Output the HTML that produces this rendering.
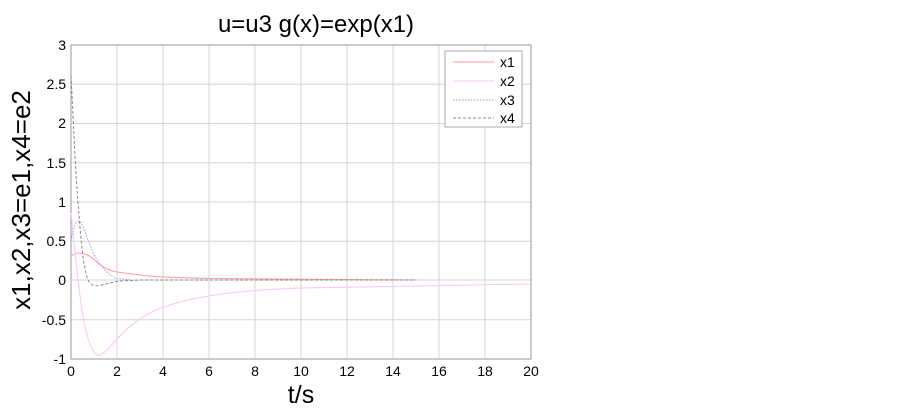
<!DOCTYPE html><html><head><style>body{margin:0;background:#fff}svg{display:block}text{font-family:"Liberation Sans",Arial,sans-serif}</style></head><body>
<svg width="900" height="410" xmlns="http://www.w3.org/2000/svg">
<rect width="900" height="410" fill="#fff"/>
<g stroke="#d4d4d4" stroke-width="1">
<line x1="117" y1="45" x2="117" y2="359"/><line x1="163" y1="45" x2="163" y2="359"/><line x1="209" y1="45" x2="209" y2="359"/><line x1="255" y1="45" x2="255" y2="359"/><line x1="301" y1="45" x2="301" y2="359"/><line x1="347" y1="45" x2="347" y2="359"/><line x1="393" y1="45" x2="393" y2="359"/><line x1="439" y1="45" x2="439" y2="359"/><line x1="485" y1="45" x2="485" y2="359"/>
<line x1="71" y1="84.2" x2="531" y2="84.2"/><line x1="71" y1="123.5" x2="531" y2="123.5"/><line x1="71" y1="162.7" x2="531" y2="162.7"/><line x1="71" y1="202" x2="531" y2="202"/><line x1="71" y1="241.2" x2="531" y2="241.2"/><line x1="71" y1="280" x2="531" y2="280"/><line x1="71" y1="319.7" x2="531" y2="319.7"/>
</g>
<rect x="71" y="45" width="460" height="314" fill="none" stroke="#999"/>
<g fill="none" stroke-width="1">
<path d="M71,256.5 C74,253 78,252 85,254 S96,262 99,264 C105,268 110,271 117,272 S150,276.5 163,277 S200,278.3 209,278.5 L417,280" stroke="#f99"/>
<path d="M71,213 C74,240 78,290 84,322 C88,342 92,352 97,355 C101,356 106,352 117,339 C133,322 148,312 163,307.5 C180,301 195,298 209,296 C240,291 270,289 301,288 L531,284" stroke="#f9c6f5"/>
<path d="M71,241 C74,226 76,220 79,221 C82,222 86,235 92,250 C97,262 104,271 115,278 L131,280" stroke="#99f" stroke-dasharray="1.5 1.5"/>
<path d="M71,76 C73,110 75,170 79,215 C82,255 85,275 89,282 C92,286 96,286 100,285.5 C107,284 112,282 120,281 L140,280 L416,280" stroke="#888" stroke-dasharray="3 2"/>
</g>
<rect x="445" y="51" width="77" height="76" fill="#fff" stroke="#aaa"/>
<line x1="453" y1="62" x2="494" y2="62" stroke="#f99"/>
<line x1="453" y1="81" x2="494" y2="81" stroke="#f9c6f5"/>
<line x1="453" y1="100" x2="494" y2="100" stroke="#99f" stroke-dasharray="1.5 1.5"/>
<line x1="453" y1="118" x2="494" y2="118" stroke="#888" stroke-dasharray="3 2"/>
<g font-size="14" fill="#000"><text x="500" y="67">x1</text><text x="500" y="86">x2</text><text x="500" y="105">x3</text><text x="500" y="123">x4</text></g>
<g font-size="14" fill="#000" text-anchor="end">
<text x="66" y="50">3</text><text x="66" y="89">2.5</text><text x="66" y="128">2</text><text x="66" y="168">1.5</text><text x="66" y="207">1</text><text x="66" y="246">0.5</text><text x="66" y="285">0</text><text x="66" y="325">-0.5</text><text x="66" y="364">-1</text>
</g>
<g font-size="14" fill="#000" text-anchor="middle">
<text x="71" y="376">0</text><text x="117" y="376">2</text><text x="163" y="376">4</text><text x="209" y="376">6</text><text x="255" y="376">8</text><text x="301" y="376">10</text><text x="347" y="376">12</text><text x="393" y="376">14</text><text x="439" y="376">16</text><text x="485" y="376">18</text><text x="531" y="376">20</text>
</g>
<text x="301" y="403" font-size="25" text-anchor="middle">t/s</text>
<text x="316" y="32" font-size="24" text-anchor="middle">u=u3 g(x)=exp(x1)</text>
<text transform="translate(30,200) rotate(-90)" font-size="26" text-anchor="middle">x1,x2,x3=e1,x4=e2</text>
</svg></body></html>
